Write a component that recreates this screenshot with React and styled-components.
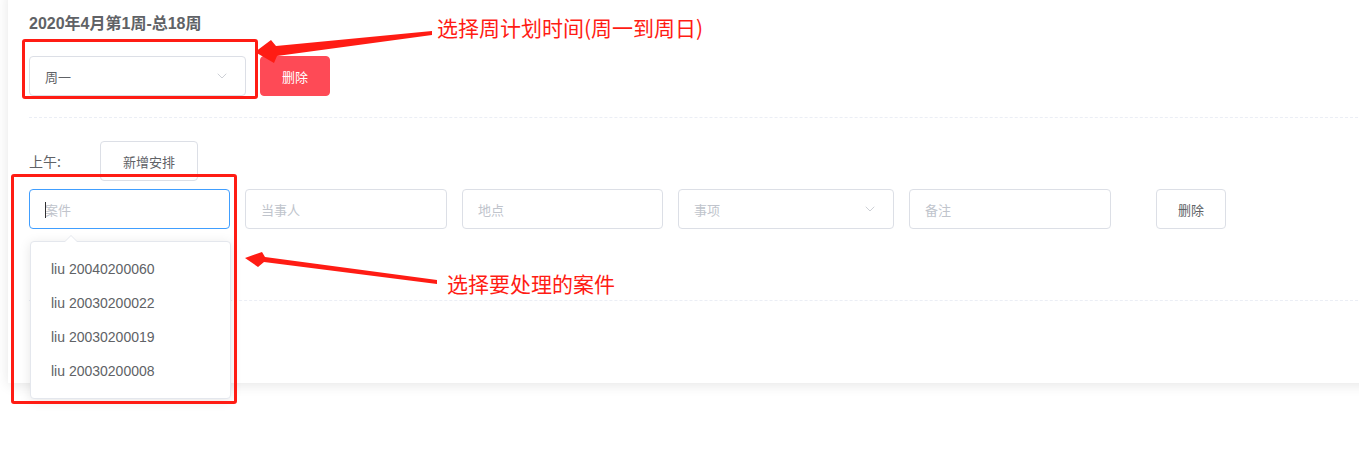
import React from 'react';
import styled, { createGlobalStyle } from 'styled-components';
import { ChevronDown } from 'lucide-react';

const GlobalStyle = createGlobalStyle`
  html, body {
    margin: 0;
    padding: 0;
    background: #fff;
    overflow: hidden;
  }
  body {
    font-family: "Noto Sans CJK SC", "Liberation Sans", sans-serif;
  }
`;

const Page = styled.div`
  position: relative;
  width: 1359px;
  height: 463px;
`;

const Card = styled.div`
  margin: -10px 0 0 8px;
  width: 1400px;
  padding: 24px 0 82px 21px;
  background: #fff;
  box-shadow: 0 2px 12px 0 rgba(0, 0, 0, 0.1);
  box-sizing: border-box;
`;

const Title = styled.div`
  font-size: 16px;
  font-weight: bold;
  line-height: 20px;
  color: #606266;
  font-family: "Liberation Sans", "Noto Sans CJK SC", sans-serif;
`;

const Row = styled.div`
  display: flex;
  align-items: center;
  gap: ${(p) => p.gap ?? 14}px;
  margin-top: ${(p) => p.top || 0}px;
`;

const Field = styled.div`
  position: relative;
  display: flex;
  flex-shrink: 0;
  align-items: center;
  justify-content: space-between;
  width: ${(p) => p.w}px;
  height: 40px;
  padding: 0 15px;
  box-sizing: border-box;
  border: 1px solid ${(p) => (p.focused ? '#409eff' : '#dcdfe6')};
  border-radius: 4px;
  background: #fff;
  font-size: 13px;
  color: ${(p) => (p.placeholder ? '#c0c4cc' : '#606266')};
`;

const Caret = styled.span`
  position: absolute;
  left: 15px;
  top: 12px;
  width: 1px;
  height: 16px;
  background: #303133;
`;

const Button = styled.div`
  display: flex;
  flex-shrink: 0;
  align-items: center;
  justify-content: center;
  width: ${(p) => p.w}px;
  height: 40px;
  margin-left: ${(p) => p.ml || 0}px;
  box-sizing: border-box;
  border-radius: 4px;
  font-size: 13px;
  border: 1px solid ${(p) => (p.danger ? '#fe4a56' : '#dcdfe6')};
  background: ${(p) => (p.danger ? '#fe4a56' : '#fff')};
  color: ${(p) => (p.danger ? '#fff' : '#606266')};
`;

const Divider = styled.div`
  margin: ${(p) => p.m};
  margin-left: 0;
  border-top: 1px dashed #ebeef5;
`;

const Label = styled.span`
  display: block;
  flex: 0 0 71px;
  font-size: 14px;
  color: #606266;
`;

const Dropdown = styled.ul`
  position: absolute;
  left: 0;
  top: 51px;
  width: 201px;
  margin: 0;
  padding: 10px 0;
  list-style: none;
  box-sizing: border-box;
  background: #fff;
  border: 1px solid #e4e7ed;
  border-radius: 4px;
  box-shadow: 0 2px 12px 0 rgba(0, 0, 0, 0.1);
  z-index: 2;

  &::before,
  &::after {
    content: '';
    position: absolute;
    left: 34px;
    border: 6px solid transparent;
    border-top-width: 0;
  }
  &::before {
    top: -7px;
    border-bottom-color: #e4e7ed;
  }
  &::after {
    top: -6px;
    border-bottom-color: #fff;
  }
`;

const Item = styled.li`
  height: 34px;
  line-height: 34px;
  padding: 0 20px;
  font-size: 14px;
  color: #606266;
  font-family: "Liberation Sans", "Noto Sans CJK SC", sans-serif;
`;

const Overlay = styled.div`
  position: absolute;
  inset: 0;
  pointer-events: none;
  z-index: 5;
`;

const Box = styled.div`
  position: absolute;
  left: ${(p) => p.x}px;
  top: ${(p) => p.y}px;
  width: ${(p) => p.w}px;
  height: ${(p) => p.h}px;
  box-sizing: border-box;
  border: 3px solid #ff1c14;
  border-radius: 3px;
`;

const Note = styled.span`
  position: absolute;
  left: ${(p) => p.x}px;
  top: ${(p) => p.y}px;
  font-size: 21px;
  line-height: 26px;
  color: #ff1c14;
  white-space: nowrap;
`;

const Arrows = styled.svg`
  position: absolute;
  left: 0;
  top: 0;
`;

const cases = ['liu 20040200060', 'liu 20030200022', 'liu 20030200019', 'liu 20030200008'];

export default function App() {
  return (
    <Page>
      <GlobalStyle />
      <Card>
        <Title>2020年4月第1周-总18周</Title>
        <Row top={22}>
          <Field w={217}>
            <span>周一</span>
            <ChevronDown size={16} strokeWidth={1.2} color="#c0c4cc" />
          </Field>
          <Button danger w={70}>删除</Button>
        </Row>
        <Divider m="21px 0 23px" />
        <Row gap={0} top={1}>
          <Label>上午:</Label>
          <Button w={98}>新增安排</Button>
        </Row>
        <Row top={8} gap={15}>
          <Field w={201} focused placeholder="1">
            <Caret />
            <span>案件</span>
            <Dropdown>
              {cases.map((c) => (
                <Item key={c}>{c}</Item>
              ))}
            </Dropdown>
          </Field>
          <Field w={202} placeholder="1"><span>当事人</span></Field>
          <Field w={201} placeholder="1"><span>地点</span></Field>
          <Field w={216} placeholder="1">
            <span>事项</span>
            <ChevronDown size={16} strokeWidth={1.2} color="#c0c4cc" />
          </Field>
          <Field w={202} placeholder="1"><span>备注</span></Field>
          <Button w={70} ml={30}>删除</Button>
        </Row>
        <Divider m="71px 0 0" />
      </Card>

      <Overlay>
        <Box x={22} y={49} w={236} h={60} />
        <Box x={11} y={184} w={226} h={230} />
        <Arrows width="1359" height="463">
          <polygon
            fill="#ff1c14"
            points="432,41 276,56 271,50 255,62 274,73 277,66 432,45"
          />
          <polygon
            fill="#ff1c14"
            points="437,290 265,267 262,262 245,268 258,277 264,272 437,294"
          />
        </Arrows>
        <Note x={437} y={24}>选择周计划时间(周一到周日)</Note>
        <Note x={447} y={280}>选择要处理的案件</Note>
      </Overlay>
    </Page>
  );
}
